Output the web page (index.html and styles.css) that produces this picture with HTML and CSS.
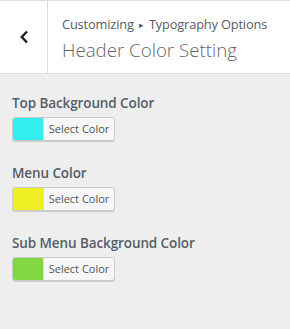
FILE: index.html
```html
<!DOCTYPE html>
<html lang="en">
<head>
  <meta charset="UTF-8" />
  <title>Header Color Setting</title>
  <link rel="stylesheet" href="styles.css">
</head>
<body>
  <div class="section-header">
    <button class="back-button" aria-label="Back">
      <svg width="10" height="14" viewBox="0 0 10 14"><path d="M8 1.5 L2.8 7 L8 12.5" fill="none" stroke="#1e1e1e" stroke-width="2.4"/></svg>
    </button>
    <div class="section-title">
      <div class="breadcrumb">Customizing <span class="arrow">&#9656;</span> Typography Options</div>
      <div class="title">Header Color Setting</div>
    </div>
  </div>

  <div class="controls">
    <div class="control">
      <div class="control-label">Top Background Color</div>
      <button class="color-picker"><span class="swatch" style="background:#33eeef"></span><span class="picker-text">Select Color</span></button>
    </div>
    <div class="control">
      <div class="control-label">Menu Color</div>
      <button class="color-picker"><span class="swatch" style="background:#eeee22"></span><span class="picker-text">Select Color</span></button>
    </div>
    <div class="control">
      <div class="control-label">Sub Menu Background Color</div>
      <button class="color-picker"><span class="swatch" style="background:#81d742"></span><span class="picker-text">Select Color</span></button>
    </div>
  </div>
</body>
</html>
```

FILE: styles.css
```css
body {
  margin: 0;
  padding: 0;
  font-family: 'Open Sans', 'Noto Sans', sans-serif;
  background: #eeeeee;
  color: #555d66;
  height: 329px;
}

.section-header {
  display: flex;
  background: #fff;
  border-top: 1px solid #dddddd;
  border-bottom: 1px solid #dddddd;
  height: 72px;
}

.back-button {
  width: 48px;
  border: none;
  border-right: 1px solid #dddddd;
  background: #fff;
  padding: 0;
  display: flex;
  align-items: center;
  justify-content: center;
  cursor: pointer;
}

.section-title {
  padding: 13px 0 0 14px;
}

.breadcrumb {
  font-size: 12.8px;
  line-height: 20px;
  color: #555d66;
  letter-spacing: -0.15px;
}

.breadcrumb .arrow {
  font-size: 9px;
  vertical-align: 1px;
  padding: 0 2px;
}

.title {
  font-size: 18.7px;
  font-weight: 300;
  line-height: 30px;
  color: #5f666d;
}

.controls {
  padding: 19px 12px;
}

.control {
  margin-bottom: 22px;
}

.control-label {
  font-size: 13.5px;
  font-weight: 600;
  line-height: 20px;
  margin-bottom: 4px;
  letter-spacing: -0.1px;
}

.color-picker {
  display: flex;
  align-items: stretch;
  height: 24px;
  width: 103px;
  padding: 0;
  border: 1px solid #cccccc;
  border-radius: 3px;
  background: #f7f7f7;
  box-shadow: 0 1px 0 #cccccc;
  overflow: hidden;
  cursor: pointer;
  font-family: inherit;
}

.swatch {
  width: 30px;
  border-right: 1px solid #dddddd;
}

.picker-text {
  flex: 1;
  font-size: 11px;
  line-height: 22px;
  color: #555555;
  text-align: center;
}
```
